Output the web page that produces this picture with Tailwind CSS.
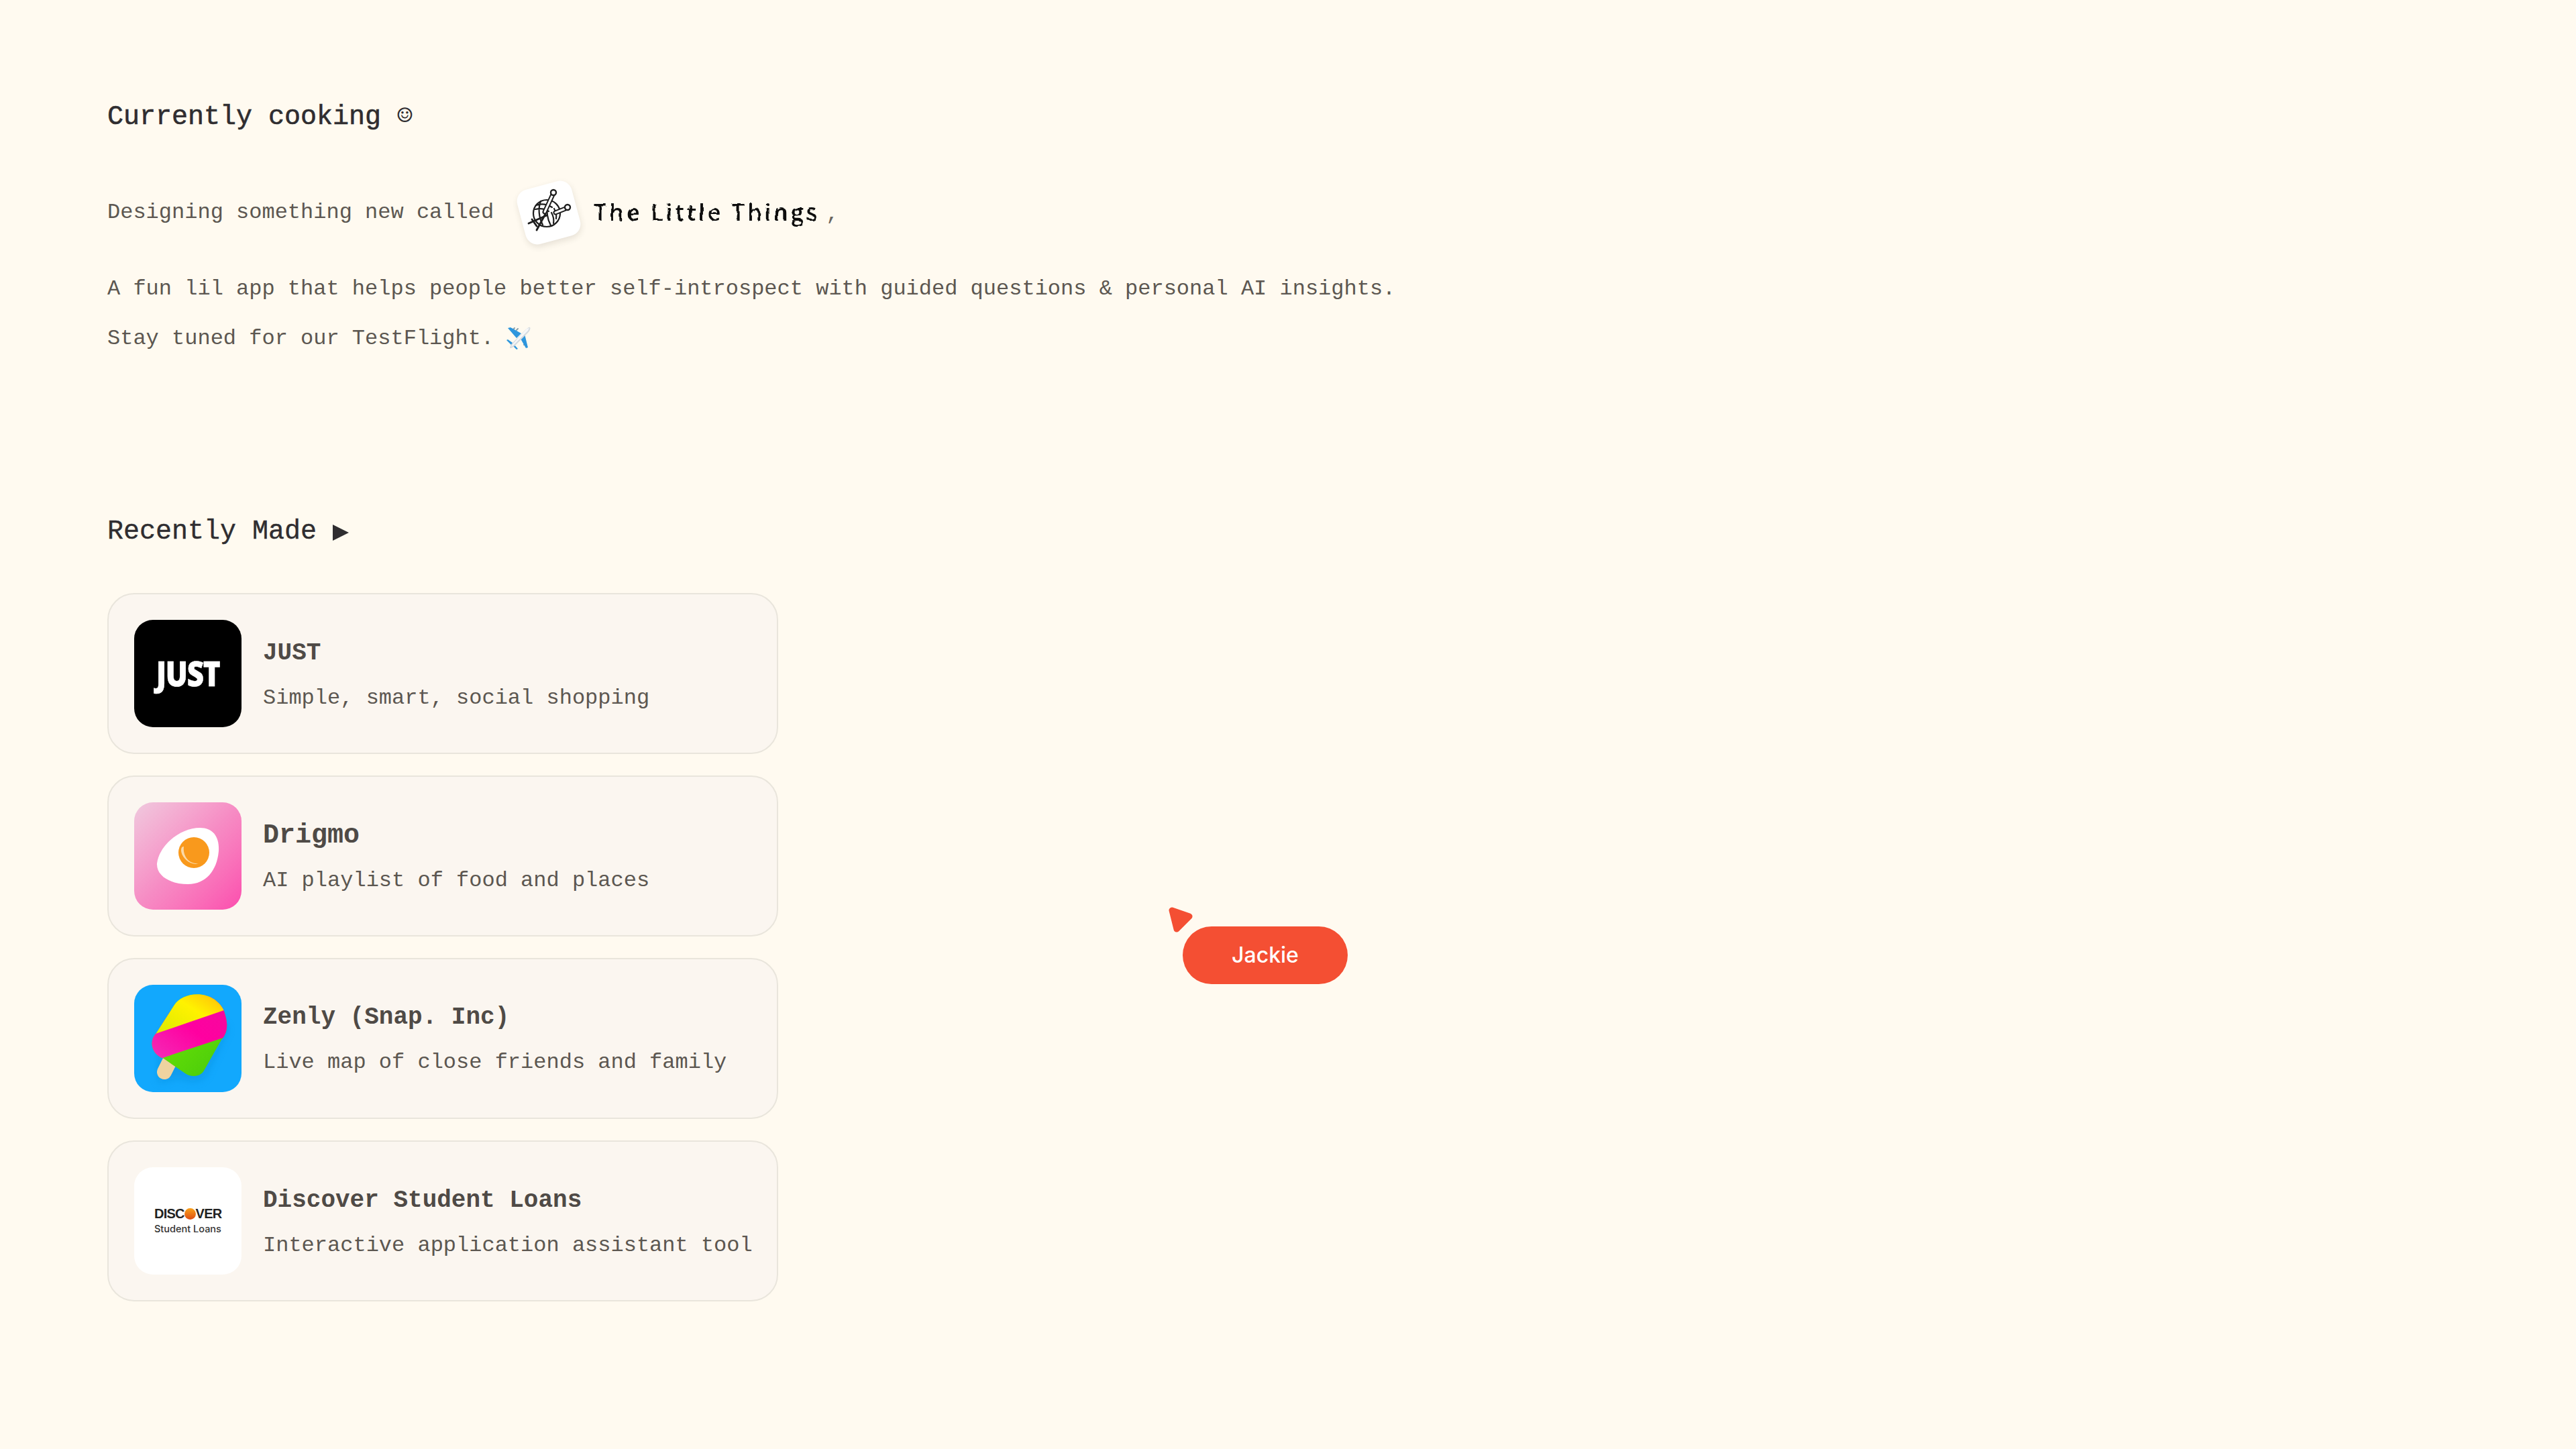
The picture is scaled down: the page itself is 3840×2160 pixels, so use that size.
<!DOCTYPE html>
<html lang="en">
<head>
    <meta charset="UTF-8">
    <meta name="viewport" content="width=device-width, initial-scale=1.0">
    <title>Jackie</title>
    <script src="https://cdn.jsdelivr.net/npm/@tailwindcss/browser@4"></script>
</head>
<body class="bg-[#fffaf0] font-['Liberation_Mono',monospace] text-[32px] text-[#5c5751]">
    <svg class="absolute w-0 h-0">
        <filter id="rough"><feTurbulence type="fractalNoise" baseFrequency="0.08" numOctaves="2" seed="7"/><feDisplacementMap in="SourceGraphic" scale="5"/></filter>
    </svg>
    <main class="relative w-[3840px] h-[2160px] pl-[160px] pt-[142px] overflow-hidden">
        <h2 class="text-[40px] leading-[60px] text-[#2f2d30] [-webkit-text-stroke:0.6px_#2f2d30]">Currently cooking <span class="font-['DejaVu_Sans_Mono'] text-[38px] [-webkit-text-stroke:0]">☺</span></h2>

        <div class="mt-[88px] flex items-center h-[48px] leading-[48px]">
            <span>Designing something new called</span>
            <div class="ml-[40px] w-[84px] h-[84px] shrink-0 -rotate-15 rounded-[18px] bg-white shadow-[0_4px_10px_rgba(60,50,30,0.12)]">
                <svg viewBox="0 0 84 84" class="w-[84px] h-[84px]" fill="none" stroke="#1d1d1d" stroke-width="2.200" stroke-linecap="round">
                    <g transform="rotate(15 42 42)">
                        <circle cx="39" cy="43" r="20"/>
                        <path d="M23 31c8-3 16-2 24 3M22 37c8-2 14-1 20 3M30 25c-4 10-3 24 3 35M41 30c-3 10-1 22 4 31M46 42c3 5 4 10 3 16M50 36c3 5 4 9 3 15"/>
                        <path stroke-width="7" d="M48 15 36 41M67 36 52 42"/>
                        <path stroke="#fff" stroke-width="3" d="M48 15 36 41M67 36 52 42"/>
                        <circle cx="49" cy="12" r="4" fill="#fff" stroke-width="2.400"/>
                        <circle cx="70" cy="34" r="4" fill="#fff" stroke-width="2.400"/>
                        <path stroke-width="2.800" d="M39 46 12 58M37 44 24 68M17 52l7 10"/>
                    </g>
                </svg>
            </div>
            <span class="ml-[25px] -mt-[3px] font-['Open_Sans',sans-serif] text-[34px] font-semibold text-[#111] tracking-[4px] whitespace-nowrap [filter:url(#rough)]">The Little Things</span>
            <span class="ml-[9px] mt-[4px] text-[32px] text-[#6a655f]">,</span>
        </div>

        <p class="mt-[66px] leading-[48px]">A fun lil app that helps people better self-introspect with guided questions &amp; personal AI insights.</p>
        <p class="mt-[26px] leading-[48px] flex items-center">Stay tuned for our TestFlight.
            <svg viewBox="0 0 54 54" class="ml-[9px] -my-[3px] w-[54px] h-[54px]">
                <g stroke-linecap="round" fill="none">
                    <path stroke="#8aa0ad" stroke-width="2" d="M20 13l2-2M25 14l2-2M35 31l2-2M36 36l2-2"/>
                </g>
                <path fill="#2e96dd" d="M12 11l4-1 16 9-7 7ZM31 27l6-7 5 20-3 1ZM19 33l-7-5-2 1 8 8ZM21 35l-1 3 5 5 2-1Z"/>
                <path fill="#d5dbe0" d="M45 10c1 1 0 5-3 8L24 36c-3 3-6 5-9 5 0-3 2-6 5-9l18-18c3-3 6-5 7-4Z"/>
                <path fill="#f6f7f8" d="M44 11 40 12 21 33c-2 2-3 4-4 6 2-1 4-3 6-5L42 15Z"/>
            </svg>
        </p>

        <h2 class="mt-[234px] text-[40px] leading-[60px] text-[#2f2d30] [-webkit-text-stroke:0.4px_#2f2d30] flex items-center">Recently Made
            <svg viewBox="0 0 24 24" class="ml-[24px] mt-[2px] w-[24px] h-[24px]"><path fill="#2f2d30" d="M0 0 24 12 0 24Z"/></svg>
        </h2>

        <div class="mt-[61px] w-[1000px] flex flex-col gap-[32px]">
            <div class="h-[240px] flex items-center gap-[32px] p-[38px] rounded-[40px] border-2 border-[#e9e5dc] bg-[#fbf6f0]">
                <div class="w-[160px] h-[160px] shrink-0 rounded-[28px] bg-black flex items-center justify-center overflow-hidden">
                    <span class="-mt-[2px] font-['Open_Sans',sans-serif] font-extrabold text-[51px] tracking-[-1.500px] text-white scale-x-[.86] [-webkit-text-stroke:0.6px_#fff]">JUST</span>
                </div>
                <div class="mt-[4px] whitespace-nowrap">
                    <h3 class="text-[36px] leading-[54px] font-bold text-[#4f4a46]">JUST</h3>
                    <p class="mt-[16px] leading-[48px]">Simple, smart, social shopping</p>
                </div>
            </div>

            <div class="h-[240px] flex items-center gap-[32px] p-[38px] rounded-[40px] border-2 border-[#e9e5dc] bg-[#fbf6f0]">
                <div class="w-[160px] h-[160px] shrink-0 rounded-[28px] overflow-hidden bg-linear-to-br from-[#efc9de] via-[#f68cc4] to-[#fb4cae]">
                    <svg viewBox="0 0 160 160" class="w-[160px] h-[160px]">
                        <path fill="#fff" d="M34 91C38 62 70 38 98 38c20 0 29 14 28 34-2 28-18 50-46 50-22 0-47-10-46-31Z"/>
                        <circle cx="89" cy="75" r="23" fill="#f9991c"/>
                        <path fill="#fbd9a6" d="M74 66c-2 14 8 27 22 25-9 4-25-6-26-19 0-4 1-6 4-6Z"/>
                    </svg>
                </div>
                <div class="mt-[4px] whitespace-nowrap">
                    <h3 class="text-[40px] leading-[54px] font-bold text-[#4f4a46]">Drigmo</h3>
                    <p class="mt-[16px] leading-[48px]">AI playlist of food and places</p>
                </div>
            </div>

            <div class="h-[240px] flex items-center gap-[32px] p-[38px] rounded-[40px] border-2 border-[#e9e5dc] bg-[#fbf6f0]">
                <div class="w-[160px] h-[160px] shrink-0 rounded-[28px] overflow-hidden bg-[#12a8fd]">
                    <svg viewBox="0 0 160 160" class="w-[160px] h-[160px]">
                        <defs>
                            <clipPath id="pop"><path d="M33 72 60 30C70 14 100 8 120 22c9 7 14 14 16 24 4 14 3 26-6 36l-26 46c-6 10-20 10-28 4L44 110C26 104 21 84 33 72Z"/></clipPath>
                            <linearGradient id="top" x1="0" y1="1" x2="1" y2="0"><stop offset="0" stop-color="#d6e800"/><stop offset=".55" stop-color="#fff200"/><stop offset="1" stop-color="#ffa50f"/></linearGradient>
                            <linearGradient id="mid" x1="0" y1="1" x2="1" y2="0"><stop offset="0" stop-color="#f03cc0"/><stop offset=".5" stop-color="#ff00a0"/><stop offset="1" stop-color="#ee0f9c"/></linearGradient>
                            <linearGradient id="bot" x1="0" y1="0" x2="1" y2="1"><stop offset="0" stop-color="#7df000"/><stop offset="1" stop-color="#3fc40e"/></linearGradient>
                            <filter id="soft" x="-20%" y="-20%" width="140%" height="140%"><feGaussianBlur stdDeviation="6"/></filter>
                        </defs>
                        <path fill="#0b8fdc" opacity=".5" filter="url(#soft)" d="M38 80 68 36c20-10 50-4 72 30l-34 70c-10 10-24 8-40 2l-30 8Z"/>
                        <path stroke="#eed3a0" stroke-width="22" stroke-linecap="round" d="M57 106 45 130"/>
                        <g clip-path="url(#pop)">
                            <rect width="160" height="160" fill="url(#bot)"/>
                            <path fill="url(#mid)" d="M0 123 160 70V0L0 60Z"/>
                            <path fill="url(#top)" d="M20 77 140 36V0H20Z"/>
                        </g>
                    </svg>
                </div>
                <div class="mt-[2px] whitespace-nowrap">
                    <h3 class="text-[36px] leading-[54px] font-bold text-[#4f4a46]">Zenly (Snap. Inc)</h3>
                    <p class="mt-[16px] leading-[48px]">Live map of close friends and family</p>
                </div>
            </div>

            <div class="h-[240px] flex items-center gap-[32px] p-[38px] rounded-[40px] border-2 border-[#e9e5dc] bg-[#fbf6f0]">
                <div class="w-[160px] h-[160px] shrink-0 rounded-[28px] bg-white flex flex-col justify-center pl-[30px] pt-[4px] font-['Inter',sans-serif] text-[#222]">
                    <div class="flex items-center font-['Liberation_Sans',sans-serif] font-bold text-[20px] leading-[20px] tracking-[-0.800px] mt-[-4px]">DISC<span class="inline-block w-[17px] h-[17px] leading-[17px] overflow-hidden rounded-full bg-linear-to-b from-[#f9a11d] to-[#dd4a12] text-transparent text-[16px]">O</span>VER</div>
                    <div class="mt-[4px] text-[14.500px] leading-[18px] font-medium text-[#333]">Student Loans</div>
                </div>
                <div class="mt-[4px] whitespace-nowrap">
                    <h3 class="text-[36px] leading-[54px] font-bold text-[#4f4a46]">Discover Student Loans</h3>
                    <p class="mt-[16px] leading-[48px]">Interactive application assistant tool</p>
                </div>
            </div>
        </div>

        <!-- name tag cursor -->
        <svg viewBox="0 0 36 38" class="absolute left-[1742px] top-[1352px] w-[36px] h-[38px]">
            <path fill="#f44f33" stroke="#f44f33" stroke-width="9" stroke-linejoin="round" d="M5 5 31 14 12 33Z"/>
        </svg>
        <div class="absolute left-[1763px] top-[1381px] w-[246px] h-[86px] rounded-full bg-[#f44f33] flex items-center justify-center font-['Inter',sans-serif] text-[32px] font-medium text-white">Jackie</div>
    </main>
</body>
</html>
